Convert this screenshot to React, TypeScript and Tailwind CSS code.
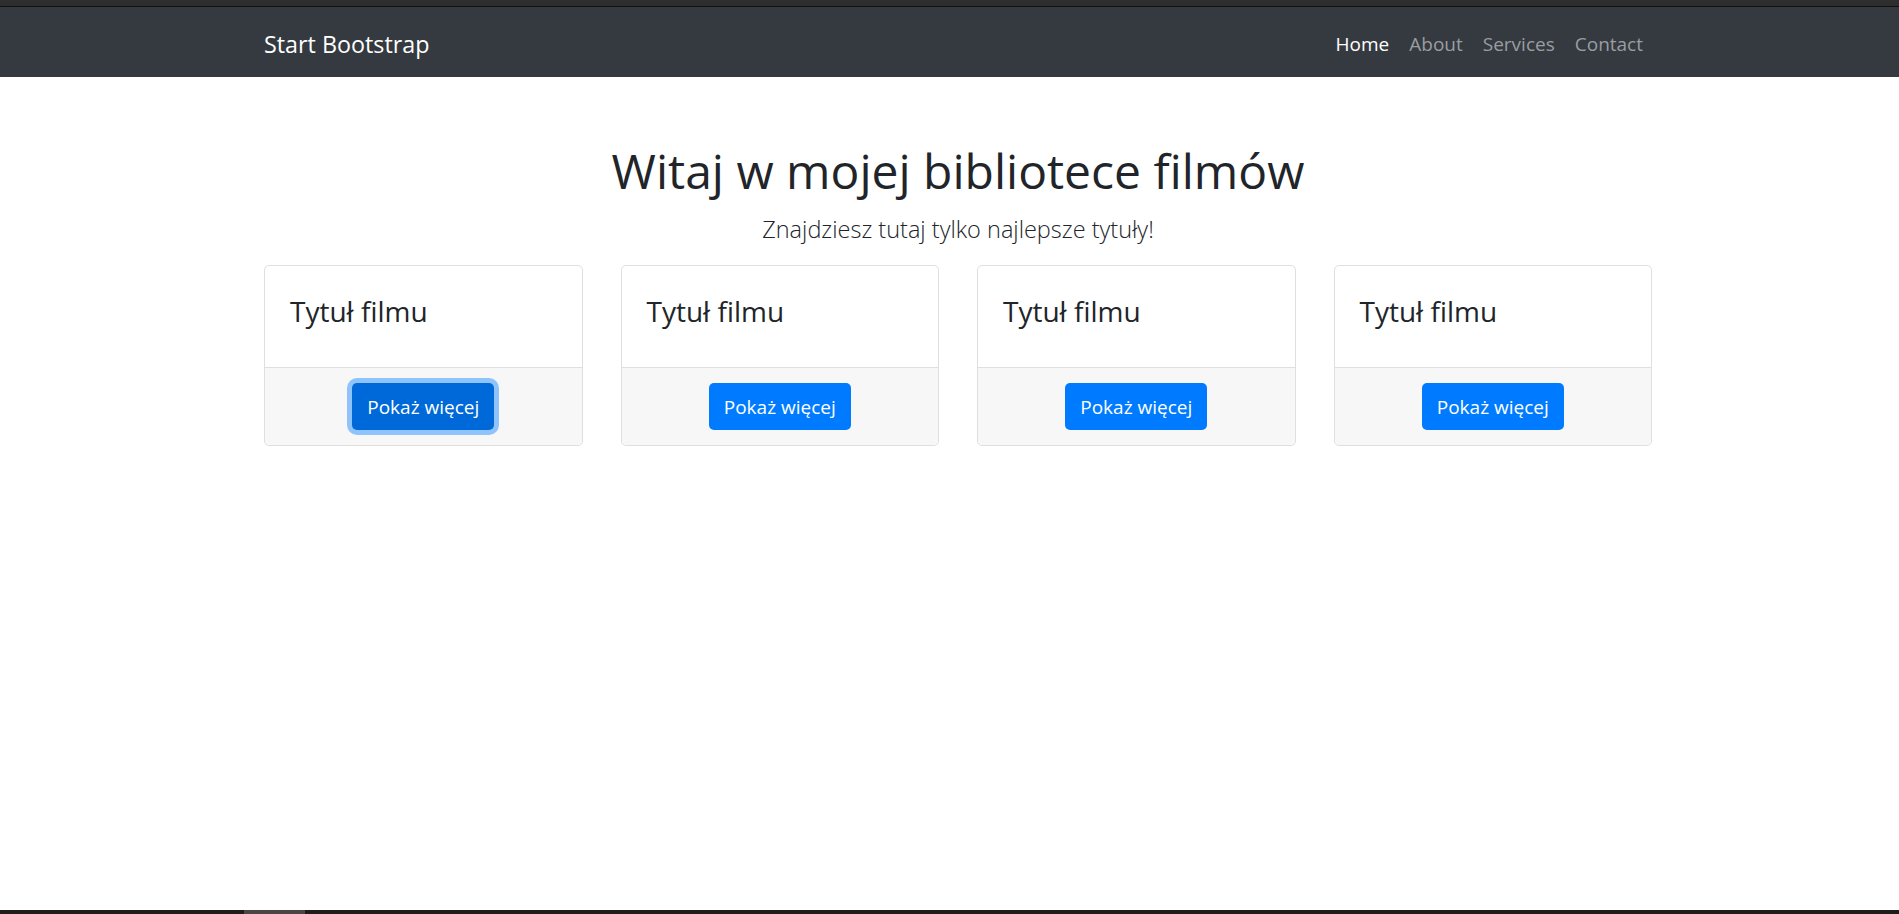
import React from "react";

const font = { fontFamily: '"Open Sans", "Noto Sans", sans-serif' };

function Card({ focused }: { focused?: boolean }) {
  return (
    <div className="flex flex-col rounded-[5px] border border-[#dfdfdf] bg-white">
      <div className="px-[25px] pt-[27px] pb-[25px]">
        <h4 className="mb-[13px] text-[28px] leading-[36px] font-normal text-[#212529]">Tytuł filmu</h4>
      </div>
      <div className="flex justify-center rounded-b-[5px] border-t border-[#dfdfdf] bg-[#f7f7f7] py-[15px]">
        {focused ? (
          <button className="h-[47px] rounded-[5px] bg-[#0069d9] px-[15px] text-[19px] leading-[30px] text-white shadow-[0_0_0_5px_rgba(38,143,255,0.5)]">
            Pokaż więcej
          </button>
        ) : (
          <button className="h-[47px] rounded-[5px] bg-[#007bff] px-[15px] text-[19px] leading-[30px] text-white">
            Pokaż więcej
          </button>
        )}
      </div>
    </div>
  );
}

export default function App() {
  return (
    <div className="flex h-screen flex-col bg-white text-[#212529]" style={font}>
      <div className="h-[6px] bg-[#2e2e2e]" />
      <div className="h-px bg-[#111111]" />
      <nav className="h-[70px] bg-[#343a40]">
        <div className="ml-[264px] flex h-full w-[1389px] items-center justify-between pt-[4px]">
          <span className="text-[23.3px] text-white">Start Bootstrap</span>
          <ul className="flex items-center">
            <li className="px-[10px] text-[19px] text-white">Home</li>
            <li className="px-[10px] text-[19px] text-[#9a9da0]">About</li>
            <li className="px-[10px] text-[19px] text-[#9a9da0]">Services</li>
            <li className="px-[10px] text-[19px] text-[#9a9da0]">Contact</li>
          </ul>
        </div>
      </nav>
      <main className="flex-1">
        <div className="ml-[264px] w-[1388px] pt-[64px]">
          <h1 className="mb-[10px] text-center text-[48px] leading-[60px] font-normal text-[#212529]">
            Witaj w mojej bibliotece filmów
          </h1>
          <p className="mb-[17px] text-center text-[23.5px] leading-[37px] font-light text-[#212529]">
            Znajdziesz tutaj tylko najlepsze tytuły!
          </p>
          <div className="grid grid-cols-4 gap-[38px]">
            <Card focused />
            <Card />
            <Card />
            <Card />
          </div>
        </div>
      </main>
      <div className="flex h-[4px] bg-[#1f1c1a]">
        <div className="ml-[244px] h-full w-[61px] bg-[#4a4644]" />
      </div>
    </div>
  );
}
